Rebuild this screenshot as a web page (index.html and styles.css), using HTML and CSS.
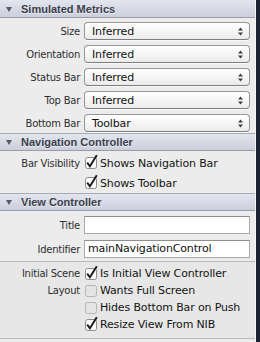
FILE: index.html
```html
<!DOCTYPE html>
<html>
<head>
<meta charset="utf-8">
<link rel="stylesheet" href="styles.css">
</head>
<body>
<div class="window">
  <div class="panel">
    <div class="group-head first"><span class="disclosure"></span>Simulated Metrics</div>
    <div class="form metrics">
      <div class="label">Size</div>
      <div class="popup"><span>Inferred</span><svg class="updown" width="5" height="9" viewBox="0 0 5 9"><path d="M0 3.5L2.5 0.5L5 3.5Z M0 5.5L2.5 8.5L5 5.5Z"/></svg></div>
      <div class="label">Orientation</div>
      <div class="popup"><span>Inferred</span><svg class="updown" width="5" height="9" viewBox="0 0 5 9"><path d="M0 3.5L2.5 0.5L5 3.5Z M0 5.5L2.5 8.5L5 5.5Z"/></svg></div>
      <div class="label">Status Bar</div>
      <div class="popup"><span>Inferred</span><svg class="updown" width="5" height="9" viewBox="0 0 5 9"><path d="M0 3.5L2.5 0.5L5 3.5Z M0 5.5L2.5 8.5L5 5.5Z"/></svg></div>
      <div class="label">Top Bar</div>
      <div class="popup"><span>Inferred</span><svg class="updown" width="5" height="9" viewBox="0 0 5 9"><path d="M0 3.5L2.5 0.5L5 3.5Z M0 5.5L2.5 8.5L5 5.5Z"/></svg></div>
      <div class="label">Bottom Bar</div>
      <div class="popup"><span>Toolbar</span><svg class="updown" width="5" height="9" viewBox="0 0 5 9"><path d="M0 3.5L2.5 0.5L5 3.5Z M0 5.5L2.5 8.5L5 5.5Z"/></svg></div>
    </div>

    <div class="group-head"><span class="disclosure"></span>Navigation Controller</div>
    <div class="form checks nav">
      <div class="label">Bar Visibility</div>
      <div class="check on"><svg class="box" width="14" height="15" viewBox="0 0 14 15"><rect x="0.5" y="3.5" width="11" height="11" rx="2"/><path class="tick" d="M2.2 8.6L4.9 12.2L11.8 1.2"/></svg><span>Shows Navigation Bar</span></div>
      <div class="label"></div>
      <div class="check on"><svg class="box" width="14" height="15" viewBox="0 0 14 15"><rect x="0.5" y="3.5" width="11" height="11" rx="2"/><path class="tick" d="M2.2 8.6L4.9 12.2L11.8 1.2"/></svg><span>Shows Toolbar</span></div>
    </div>

    <div class="group-head"><span class="disclosure"></span>View Controller</div>
    <div class="form fields">
      <div class="label">Title</div>
      <div class="field"></div>
      <div class="label">Identifier</div>
      <div class="field">mainNavigationControl</div>
    </div>
    <div class="form checks scene">
      <div class="label">Initial Scene</div>
      <div class="check on"><svg class="box" width="14" height="15" viewBox="0 0 14 15"><rect x="0.5" y="3.5" width="11" height="11" rx="2"/><path class="tick" d="M2.2 8.6L4.9 12.2L11.8 1.2"/></svg><span>Is Initial View Controller</span></div>
      <div class="label">Layout</div>
      <div class="check off"><svg class="box" width="14" height="15" viewBox="0 0 14 15"><rect x="0.5" y="3.5" width="11" height="11" rx="2"/></svg><span>Wants Full Screen</span></div>
      <div class="label"></div>
      <div class="check off"><svg class="box" width="14" height="15" viewBox="0 0 14 15"><rect x="0.5" y="3.5" width="11" height="11" rx="2"/></svg><span>Hides Bottom Bar on Push</span></div>
      <div class="label"></div>
      <div class="check on"><svg class="box" width="14" height="15" viewBox="0 0 14 15"><rect x="0.5" y="3.5" width="11" height="11" rx="2"/><path class="tick" d="M2.2 8.6L4.9 12.2L11.8 1.2"/></svg><span>Resize View From NIB</span></div>
    </div>
  </div>
  <div class="edge"></div>
</div>
</body>
</html>
```

FILE: styles.css
```css
html, body {
  margin: 0;
  padding: 0;
  background: #ececec;
}

.window {
  width: 260px;
  height: 342px;
  display: flex;
  overflow: hidden;
  font-family: "DejaVu Sans", sans-serif;
  font-size: 11px;
  color: #1c1c1c;
}

.panel {
  width: 255px;
  background: #ececec;
  border-right: 1px solid #f6f6f6;
  display: flex;
  flex-direction: column;
}

.edge {
  flex: 1;
  background: #1d2432;
}

.group-head {
  height: 16px;
  border-top: 1px solid #a7abb6;
  border-bottom: 1px solid #989ca8;
  background: linear-gradient(#e3e5ee, #cbcfdc);
  display: flex;
  align-items: center;
  padding-left: 6px;
  font-family: "Liberation Sans", Arial, sans-serif;
  font-weight: bold;
  font-size: 11px;
  color: #3a3f4b;
  text-shadow: 0 1px 0 rgba(255,255,255,0.6);
}

.group-head.first {
  height: 17px;
  border-top: none;
}

.disclosure {
  width: 0;
  height: 0;
  border-left: 3px solid transparent;
  border-right: 3px solid transparent;
  border-top: 5px solid #545a66;
  margin-right: 9px;
  margin-top: 1px;
}

.form {
  display: grid;
  grid-template-columns: 80px 1fr;
  column-gap: 4px;
  padding-right: 5px;
  align-items: center;
}

.label {
  text-align: right;
  font-size: 10px;
  letter-spacing: -0.25px;
  color: #2e2e2e;
  white-space: nowrap;
}

.metrics {
  row-gap: 5px;
  padding-top: 4px;
  padding-bottom: 1px;
}

.popup {
  height: 16px;
  border: 1px solid #979797;
  border-bottom-color: #7f7f7f;
  border-radius: 4px;
  background: linear-gradient(#ffffff, #f6f6f6 50%, #ebebeb);
  box-shadow: 0 1px 0 rgba(255,255,255,0.7);
  display: flex;
  align-items: center;
  justify-content: space-between;
  padding: 0 6px 0 7px;
  letter-spacing: -0.15px;
  color: #111;
}

.updown {
  fill: #3d3d3d;
}

.checks {
  row-gap: 0;
}

.nav {
  grid-auto-rows: 20px;
  padding-top: 2px;
}

.check {
  display: flex;
  align-items: center;
  padding-left: 1px;
  letter-spacing: -0.15px;
  color: #141414;
  white-space: nowrap;
}

.box {
  margin-right: 1px;
  margin-top: -3px;
  flex: none;
}

.box rect {
  fill: #fbfbfb;
  stroke: #8c8c8c;
}

.check.off .box rect {
  fill: #e4e4e4;
  stroke: #b5b5b5;
}

.tick {
  fill: none;
  stroke: #1a1a1a;
  stroke-width: 1.9;
  stroke-linejoin: miter;
}

.fields {
  row-gap: 6px;
  padding-top: 5px;
  padding-bottom: 3px;
}

.field {
  height: 16px;
  background: #ffffff;
  border: 1px solid #a9a9a9;
  border-top-color: #8e8e8e;
  padding: 0 3px;
  line-height: 16px;
  letter-spacing: -0.15px;
  color: #111;
}

.scene {
  grid-auto-rows: 17px;
  background: #e7e7e7;
  border-top: 1px solid #b9b9b9;
  border-bottom: 1px solid #b9b9b9;
  padding-top: 3px;
  padding-bottom: 5px;
}
```
